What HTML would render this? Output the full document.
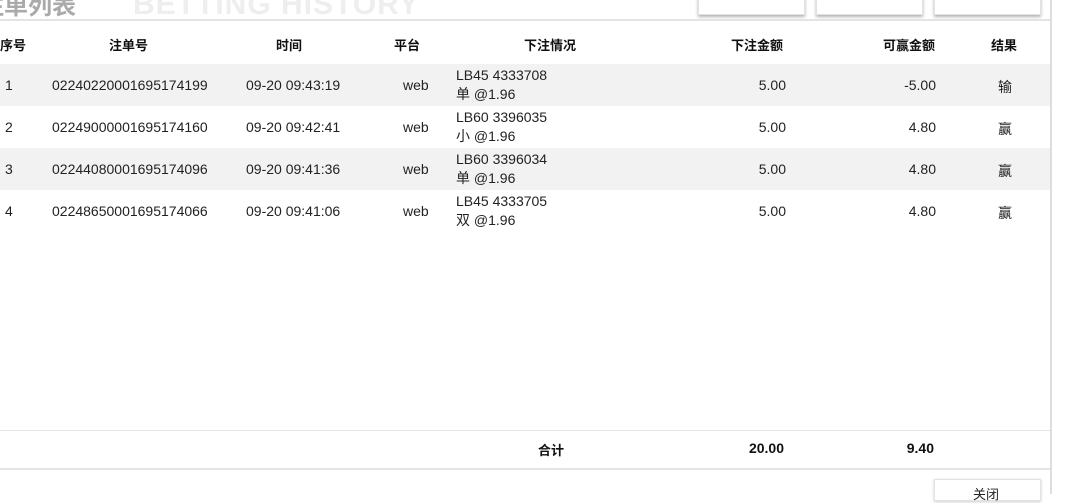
<!DOCTYPE html>
<html><head><meta charset="utf-8"><style>
body{margin:0;width:1080px;height:494px;background:#fff;position:relative;overflow:hidden;font-family:"Liberation Sans","Noto Sans CJK SC",sans-serif;font-size:14px;color:#222}
.abs{position:absolute}
.panel{left:0;top:0;width:1050px;height:494px;border-right:2px solid #ddd}
.title{left:-20px;top:-14px;font-size:24px;font-weight:bold;color:#aaa}
.bg{left:133px;top:-12px;font-size:30px;font-weight:bold;color:#eee;letter-spacing:1px}
.btn{top:-4px;width:105px;height:17px;background:#fff;border:1px solid #e2e2e2;box-shadow:0 2px 3px rgba(0,0,0,.3)}
.hline{left:0;width:1050px;height:2px;background:#e4e4e4}
.row{left:0;width:1050px;height:42px}
.g{background:#f2f2f2}
.c{position:absolute;white-space:nowrap}
.h{font-weight:bold;color:#111;font-size:13px}
</style></head><body>
<div class="abs panel"></div>
<div class="abs title">注单列表</div>
<div class="abs bg">BETTING HISTORY</div>
<div class="abs btn" style="left:698px"></div>
<div class="abs btn" style="left:816px"></div>
<div class="abs btn" style="left:934px"></div>
<div class="abs hline" style="top:19px"></div>

<div class="abs row" style="top:22px">
<span class="c h" style="left:0;top:13px">序号</span>
<span class="c h" style="left:109px;top:13px">注单号</span>
<span class="c h" style="left:276px;top:13px">时间</span>
<span class="c h" style="left:394px;top:13px">平台</span>
<span class="c h" style="left:524px;top:13px">下注情况</span>
<span class="c h" style="right:267px;top:13px">下注金额</span>
<span class="c h" style="right:115px;top:13px">可赢金额</span>
<span class="c h" style="left:991px;top:13px">结果</span>
</div>

<div class="abs row g" style="top:64px">
<span class="c" style="left:5px;top:13px">1</span>
<span class="c" style="left:52px;top:13px">02240220001695174199</span>
<span class="c" style="left:246px;top:13px">09-20 09:43:19</span>
<span class="c" style="left:403px;top:13px">web</span>
<span class="c" style="left:456px;top:2px;line-height:19px">LB45 4333708<br>单 @1.96</span>
<span class="c" style="right:264px;top:13px">5.00</span>
<span class="c" style="right:114px;top:13px">-5.00</span>
<span class="c" style="left:998px;top:13px">输</span>
</div>
<div class="abs row" style="top:106px">
<span class="c" style="left:5px;top:13px">2</span>
<span class="c" style="left:52px;top:13px">02249000001695174160</span>
<span class="c" style="left:246px;top:13px">09-20 09:42:41</span>
<span class="c" style="left:403px;top:13px">web</span>
<span class="c" style="left:456px;top:2px;line-height:19px">LB60 3396035<br>小 @1.96</span>
<span class="c" style="right:264px;top:13px">5.00</span>
<span class="c" style="right:114px;top:13px">4.80</span>
<span class="c" style="left:998px;top:13px">赢</span>
</div>
<div class="abs row g" style="top:148px">
<span class="c" style="left:5px;top:13px">3</span>
<span class="c" style="left:52px;top:13px">02244080001695174096</span>
<span class="c" style="left:246px;top:13px">09-20 09:41:36</span>
<span class="c" style="left:403px;top:13px">web</span>
<span class="c" style="left:456px;top:2px;line-height:19px">LB60 3396034<br>单 @1.96</span>
<span class="c" style="right:264px;top:13px">5.00</span>
<span class="c" style="right:114px;top:13px">4.80</span>
<span class="c" style="left:998px;top:13px">赢</span>
</div>
<div class="abs row" style="top:190px">
<span class="c" style="left:5px;top:13px">4</span>
<span class="c" style="left:52px;top:13px">02248650001695174066</span>
<span class="c" style="left:246px;top:13px">09-20 09:41:06</span>
<span class="c" style="left:403px;top:13px">web</span>
<span class="c" style="left:456px;top:2px;line-height:19px">LB45 4333705<br>双 @1.96</span>
<span class="c" style="right:264px;top:13px">5.00</span>
<span class="c" style="right:114px;top:13px">4.80</span>
<span class="c" style="left:998px;top:13px">赢</span>
</div>

<div class="abs hline" style="top:430px;height:1px"></div>
<div class="abs row" style="top:431px;height:37px">
<span class="c h" style="left:538px;top:9px">合计</span>
<span class="c h" style="right:266px;top:9px;font-size:14px">20.00</span>
<span class="c h" style="right:116px;top:9px;font-size:14px">9.40</span>
</div>
<div class="abs hline" style="top:468px"></div>
<div class="abs btn" style="left:934px;top:479px;height:20px;box-shadow:0 1px 3px rgba(0,0,0,.2)"><span class="c" style="left:38px;top:4px;font-size:13px">关闭</span></div>
</body></html>
